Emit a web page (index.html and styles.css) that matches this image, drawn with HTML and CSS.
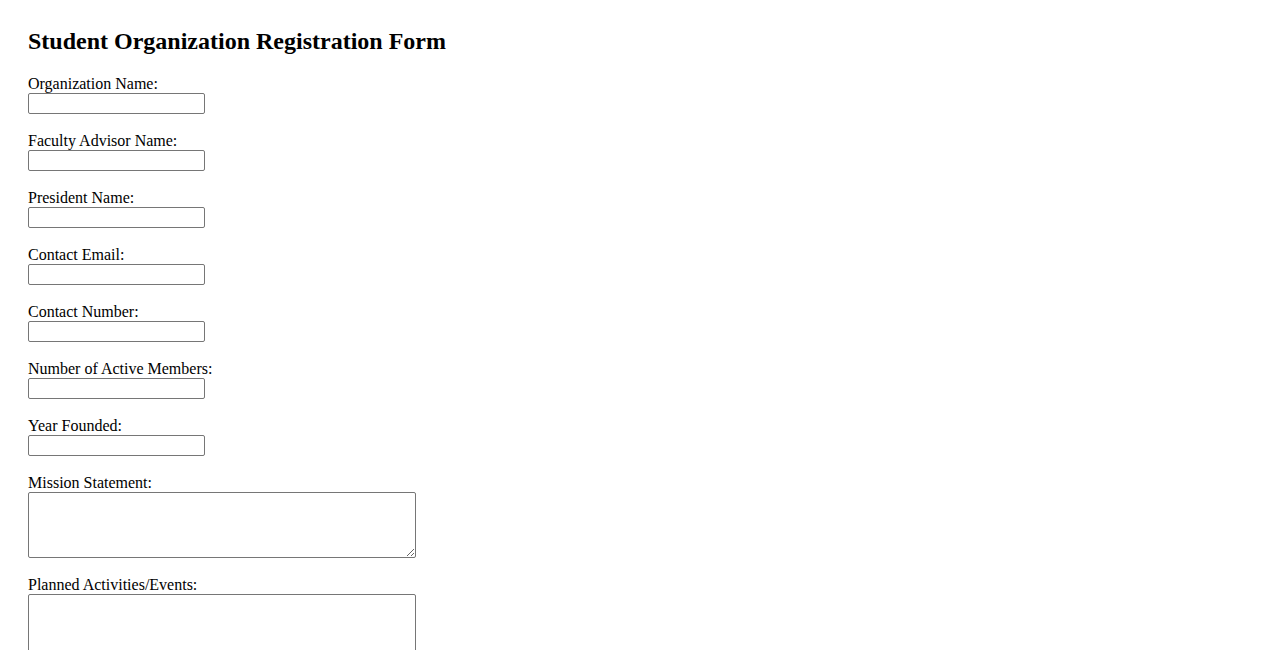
FILE: index.html
```html
<!DOCTYPE html>
<html lang="en">
<head>
<meta charset="utf-8">
<title>Student Organization Registration Form</title>
<link rel="stylesheet" href="styles.css">
</head>
<body>
<main class="page">
  <h2 class="title">Student Organization Registration Form</h2>
  <form class="form">
    <div class="field">
      <label for="org">Organization Name:</label>
      <input class="text" type="text" id="org" name="org">
    </div>
    <div class="field">
      <label for="advisor">Faculty Advisor Name:</label>
      <input class="text" type="text" id="advisor" name="advisor">
    </div>
    <div class="field">
      <label for="president">President Name:</label>
      <input class="text" type="text" id="president" name="president">
    </div>
    <div class="field">
      <label for="email">Contact Email:</label>
      <input class="text" type="email" id="email" name="email">
    </div>
    <div class="field">
      <label for="phone">Contact Number:</label>
      <input class="text" type="tel" id="phone" name="phone">
    </div>
    <div class="field">
      <label for="members">Number of Active Members:</label>
      <input class="text" type="number" id="members" name="members">
    </div>
    <div class="field">
      <label for="year">Year Founded:</label>
      <input class="text" type="number" id="year" name="year">
    </div>
    <div class="field">
      <label for="mission">Mission Statement:</label>
      <textarea class="area" id="mission" name="mission"></textarea>
    </div>
    <div class="field">
      <label for="events">Planned Activities/Events:</label>
      <textarea class="area" id="events" name="events"></textarea>
    </div>
  </form>
</main>
</body>
</html>
```
FILE: styles.css
```css
html, body {
  margin: 0;
  padding: 0;
  background: #ffffff;
}
body {
  font-family: "Liberation Serif", "Times New Roman", serif;
  font-size: 16px;
  color: #000000;
}
.page {
  padding: 28px;
}
.title {
  margin: 0 0 19px 0;
  font-size: 24px;
  font-weight: bold;
  line-height: normal;
}
.form {
  display: flex;
  flex-direction: column;
}
.field {
  display: flex;
  flex-direction: column;
  align-items: flex-start;
  margin-bottom: 17px;
}
.field label {
  line-height: 19px;
}
.text {
  box-sizing: border-box;
  width: 177px;
  height: 21px;
  margin: 0;
  padding: 1px 2px;
  border: 1px solid #767676;
  border-radius: 2px;
  background: #ffffff;
  font-family: "Liberation Sans", Arial, sans-serif;
  font-size: 13.33px;
  -moz-appearance: textfield;
  appearance: textfield;
}
.text::-webkit-outer-spin-button,
.text::-webkit-inner-spin-button {
  -webkit-appearance: none;
  margin: 0;
}
.area {
  box-sizing: border-box;
  width: 388px;
  height: 66px;
  margin: 0;
  padding: 2px;
  border: 1px solid #767676;
  border-radius: 2px;
  background: #ffffff;
  font-family: "Liberation Mono", monospace;
  font-size: 13.33px;
  resize: both;
}
```
